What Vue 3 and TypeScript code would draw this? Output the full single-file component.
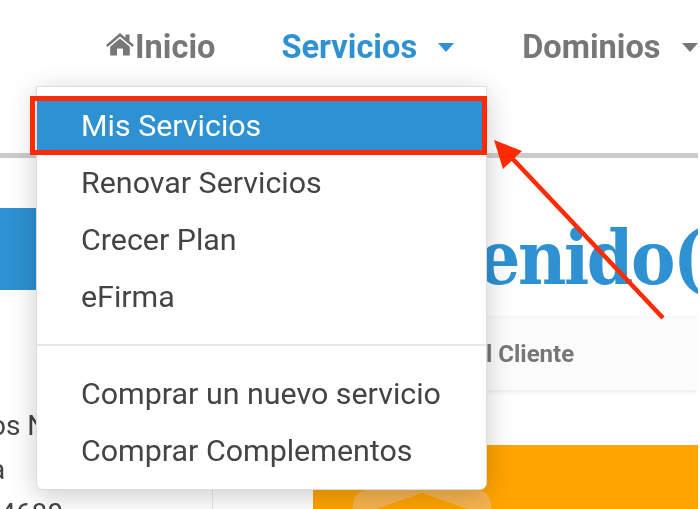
<script setup lang="ts">
const group1: string[] = ['Renovar Servicios', 'Crecer Plan', 'eFirma']
const group2: string[] = ['Comprar un nuevo servicio', 'Comprar Complementos']
</script>

<template>
  <div class="page">
    <header class="nav">
      <a class="link home">
        <svg class="home-icon" viewBox="0 0 30 24" width="30" height="24">
          <path d="M15 1 L1 13 L2.6 15 L15 4.6 L27.4 15 L29 13 L24.5 9.2 V2.5 H20.5 V5.8 Z" fill="#777" />
          <path d="M15 6.6 L5.2 14.8 V23.4 H12 V16.6 H18 V23.4 H24.8 V14.8 Z" fill="#777" />
        </svg>Inicio
      </a>
      <a class="link active">Servicios<span class="caret"></span></a>
      <a class="link">Dominios<span class="caret"></span></a>
    </header>

    <main class="body">
      <aside class="side">
        <div class="side-banner"></div>
        <p class="side-text shifted">os Nombre</p>
        <p class="side-text shifted">a</p>
        <p class="side-text">4680</p>
      </aside>
      <section class="content">
        <h1 class="welcome">Bienvenido(a)</h1>
        <div class="crumb">Área del Cliente</div>
        <div class="promo">
          <svg class="hex" viewBox="0 0 140 24" width="140" height="24">
            <path d="M0 24 L2 12 Q4 4 14 2 H126 Q136 4 138 12 L140 24 Z" fill="#f8b54f" />
            <path d="M16 24 L70 5 L124 24 Z" fill="#ffa400" />
          </svg>
        </div>
      </section>
    </main>

    <div class="menu">
      <a class="item selected">Mis Servicios</a>
      <a v-for="label in group1" :key="label" class="item">{{ label }}</a>
      <hr class="divider" />
      <a v-for="label in group2" :key="label" class="item">{{ label }}</a>
    </div>

    <div class="highlight"></div>
    <svg class="arrow" viewBox="0 0 700 509" width="700" height="509">
      <line x1="663" y1="318" x2="510" y2="156" stroke="#ff2a00" stroke-width="4.5" />
      <path d="M494 140 L522 151 L503 169 Z" fill="#ff2a00" />
    </svg>
  </div>
</template>

<style>
html, body {
  margin: 0;
  background: #fff;
}
</style>

<style scoped>
.page {
  position: relative;
  width: 700px;
  height: 509px;
  overflow: hidden;
  background: #fff;
  font-family: Roboto, "Liberation Sans", sans-serif;
  filter: blur(0.45px);
}
.nav {
  box-sizing: border-box;
  width: 698px;
  height: 158px;
  padding: 27px 0 0 105px;
  display: flex;
  gap: 66px;
  overflow: hidden;
  border-bottom: 5px solid #ccc;
}
.link {
  display: flex;
  align-items: flex-start;
  height: 40px;
  line-height: 40px;
  font-size: 32.6px;
  font-weight: 700;
  color: #777;
  white-space: nowrap;
}
.link.active {
  color: #2d91d2;
}
.home-icon {
  margin-top: 5px;
}
.caret {
  margin: 16px 2px 0 21px;
  border-left: 8.5px solid transparent;
  border-right: 8.5px solid transparent;
  border-top: 9px solid currentColor;
}
.body {
  display: grid;
  grid-template-columns: 213px 1fr;
  width: 698px;
  height: 351px;
}
.side {
  border-right: 1px solid #e6e6e6;
  padding-top: 50px;
  overflow: hidden;
}
.side-banner {
  height: 82px;
  background: #2d91d2;
  margin-bottom: 114px;
}
.side-text {
  margin: 0;
  height: 44px;
  line-height: 44px;
  font-size: 28px;
  color: #444;
  white-space: nowrap;
}
.side-text.shifted {
  margin-left: -10px;
}
.content {
  min-width: 0;
  overflow: hidden;
}
.welcome {
  margin: 51px 0 0 0;
  height: 109px;
  line-height: 98px;
  font-family: "DejaVu Serif Condensed", "DejaVu Serif", serif;
  font-size: 74px;
  font-weight: 700;
  letter-spacing: -2.4px;
  color: #2d91d2;
  white-space: nowrap;
  text-indent: 66px;
}
.crumb {
  height: 72px;
  line-height: 72px;
  padding-left: 190px;
  background: #fcfcfc;
  box-shadow: 0 1px 6px rgba(0, 0, 0, 0.1);
  font-size: 24px;
  font-weight: 700;
  color: #777;
  white-space: nowrap;
}
.promo {
  margin: 55px 0 0 100px;
  height: 64px;
  overflow: hidden;
  background: #ffa400;
}
.hex {
  display: block;
  margin: 43px 0 0 39px;
}
.menu {
  position: absolute;
  left: 36px;
  top: 86px;
  box-sizing: border-box;
  width: 451px;
  height: 404px;
  padding: 10px 0;
  background: #fff;
  border: 1px solid #ddd;
  border-radius: 0 0 7px 7px;
  box-shadow: 0 6px 28px rgba(0, 0, 0, 0.2);
}
.item {
  display: block;
  height: 57px;
  line-height: 57px;
  padding-left: 44px;
  font-size: 30.4px;
  color: #444;
  white-space: nowrap;
}
.item.selected {
  background: #2d91d2;
  color: #fff;
}
.divider {
  margin: 19px 0;
  border: 0;
  border-top: 2px solid #e8e8e8;
}
.highlight {
  position: absolute;
  left: 30px;
  top: 96px;
  box-sizing: border-box;
  width: 457px;
  height: 59px;
  border: 5px solid #ff2a00;
}
.arrow {
  position: absolute;
  left: 0;
  top: 0;
  pointer-events: none;
}
</style>
